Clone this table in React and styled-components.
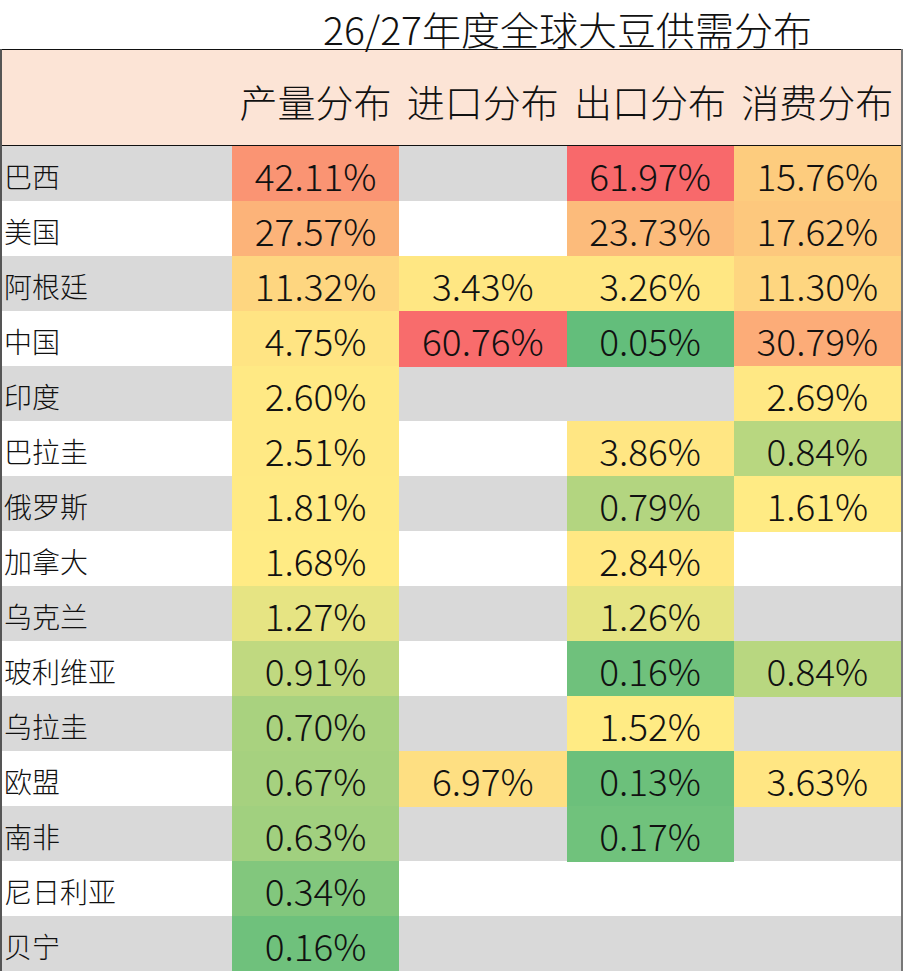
import React from 'react'
import styled, { createGlobalStyle } from 'styled-components'

const GlobalStyle = createGlobalStyle`
  body {
    margin: 0;
    background: #ffffff;
    font-family: "Noto Sans CJK SC", "Noto Sans", sans-serif;
    color: #111111;
  }
`

const columns = ['产量分布', '进口分布', '出口分布', '消费分布']

const rows = [
  ['巴西', '42.11', null, '61.97', '15.76'],
  ['美国', '27.57', null, '23.73', '17.62'],
  ['阿根廷', '11.32', '3.43', '3.26', '11.30'],
  ['中国', '4.75', '60.76', '0.05', '30.79'],
  ['印度', '2.60', null, null, '2.69'],
  ['巴拉圭', '2.51', null, '3.86', '0.84'],
  ['俄罗斯', '1.81', null, '0.79', '1.61'],
  ['加拿大', '1.68', null, '2.84', null],
  ['乌克兰', '1.27', null, '1.26', null],
  ['玻利维亚', '0.91', null, '0.16', '0.84'],
  ['乌拉圭', '0.70', null, '1.52', null],
  ['欧盟', '0.67', '6.97', '0.13', '3.63'],
  ['南非', '0.63', null, '0.17', null],
  ['尼日利亚', '0.34', null, null, null],
  ['贝宁', '0.16', null, null, null],
]

// excel style 3-colour scale: green -> yellow -> red
const GREEN = [99, 190, 123]
const YELLOW = [255, 235, 132]
const RED = [248, 105, 107]
const MIN = 0.05
const MID = 1.5
const MAX = 61.97

const mix = (a, b, t) => a.map((c, i) => Math.round(c + (b[i] - c) * t))

const scaleColor = (value) => {
  const v = parseFloat(value)
  let rgb
  if (v <= MID) {
    rgb = mix(GREEN, YELLOW, Math.max(0, (v - MIN) / (MID - MIN)))
  } else {
    rgb = mix(YELLOW, RED, Math.min(1, (v - MID) / (MAX - MID)))
  }
  return `rgb(${rgb.join(',')})`
}

function App() {
  return (
    <Page>
      <GlobalStyle />
      <TitleRow>
        <span />
        <Title>26/27年度全球大豆供需分布</Title>
      </TitleRow>
      <Table>
        <HeaderRow>
          <span />
          {columns.map(col => (
            <HeaderCell key={col}>{col}</HeaderCell>
          ))}
        </HeaderRow>
        {rows.map(([name, ...values], i) => (
          <Row key={name} $striped={i % 2 === 0}>
            <NameCell>{name}</NameCell>
            {values.map((v, j) => (
              <ValueCell key={j} $bg={v ? scaleColor(v) : null}>
                {v ? `${v}%` : ''}
              </ValueCell>
            ))}
          </Row>
        ))}
      </Table>
    </Page>
  )
}

export default App

const Page = styled.div`
  width: 903px;
  font-weight: 300;
`

const TitleRow = styled.div`
  display: grid;
  grid-template-columns: 232px 1fr;
  height: 49px;
  box-sizing: border-box;
  padding-top: 7px;
`

const Title = styled.h1`
  margin: 0;
  font-size: 39px;
  font-weight: 300;
  line-height: 42px;
  text-align: center;
  white-space: nowrap;
`

const Table = styled.div`
  border-left: 2px solid #555555;
  border-right: 2px solid #777777;
`

const HeaderRow = styled.div`
  display: grid;
  grid-template-columns: 230px repeat(4, 1fr);
  align-items: center;
  height: 97px;
  background: #fce4d6;
  border-top: 1px solid #111111;
  border-bottom: 1px solid #111111;
  box-sizing: border-box;
`

const HeaderCell = styled.div`
  font-size: 38px;
  text-align: center;
  white-space: nowrap;
  padding-top: 6px;
  line-height: 1.2;
`

const Row = styled.div`
  display: grid;
  grid-template-columns: 230px repeat(4, 1fr);
  height: 55px;
  background: ${p => (p.$striped ? '#d9d9d9' : '#ffffff')};
`

const NameCell = styled.div`
  display: flex;
  align-items: center;
  padding: 3px 0 0 2px;
  font-size: 28px;
  white-space: nowrap;
`

const ValueCell = styled.div`
  display: flex;
  align-items: center;
  justify-content: center;
  padding-top: 2px;
  font-size: 37px;
  background: ${p => p.$bg || 'transparent'};
`
